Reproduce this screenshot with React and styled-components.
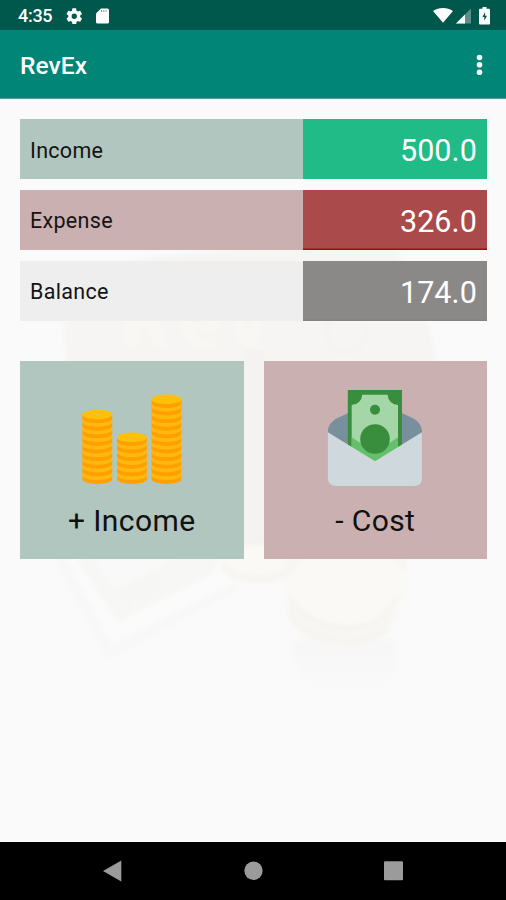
import React from "react";
import styled, { createGlobalStyle } from "styled-components";

const GlobalStyle = createGlobalStyle`
  * { box-sizing: border-box; }
  html, body { margin: 0; padding: 0; }
  body { font-family: Roboto, "Noto Sans", sans-serif; background: #fafafa; }
`;

const Screen = styled.div`
  width: 506px;
  height: 900px;
  display: flex;
  flex-direction: column;
  overflow: hidden;
  background: #fafafa;
`;

const StatusBar = styled.header`
  height: 30px;
  flex: none;
  display: flex;
  align-items: center;
  padding: 2px 16px 0 18px;
  background: #00574b;
  color: #fff;
`;

const Clock = styled.span`
  width: 48px;
  font-size: 18px;
  font-weight: 500;
  line-height: 20px;
  letter-spacing: -0.3px;
`;

const StatusIcons = styled.div`
  display: flex;
  align-items: center;
`;

const LeftIcons = styled(StatusIcons)`
  gap: 13px;
`;

const RightIcons = styled(StatusIcons)`
  gap: 3px;
  margin-left: auto;
`;

const BatterySlot = styled.span`
  display: flex;
  margin-left: 5px;
`;

const AppBar = styled.div`
  height: 69px;
  flex: none;
  display: flex;
  align-items: center;
  justify-content: space-between;
  padding: 2px 23px 0 20px;
  background: #008577;
  border-bottom: 1px solid #4b9c92;
  color: #fff;
`;

const Title = styled.h1`
  margin: 2px 0 0;
  font-size: 24.5px;
  font-weight: 500;
  line-height: 30px;
  letter-spacing: 0.1px;
`;

const MenuButton = styled.button`
  display: flex;
  padding: 0;
  border: 0;
  background: none;
`;

const Content = styled.main`
  flex: 1;
  position: relative;
  padding: 20px 19px 0 20px;
`;

const Backdrop = styled.svg`
  position: absolute;
  left: 0;
  top: 0;
  display: block;
`;

const Body = styled.div`
  position: relative;
  display: flex;
  flex-direction: column;
  gap: 40px;
`;

const Summary = styled.section`
  display: flex;
  flex-direction: column;
  gap: 10.5px;
`;

const SummaryRow = styled.div`
  height: 60.3px;
  display: grid;
  grid-template-columns: 282.5px 1fr;
`;

const RowLabel = styled.div`
  display: flex;
  align-items: center;
  padding: 2px 0 0 10px;
  background: ${(p) => p.$bg};
  color: #141414;
  font-size: 21.5px;
  letter-spacing: 0.3px;
`;

const RowValue = styled.div`
  display: flex;
  align-items: center;
  justify-content: flex-end;
  padding: 3px 10px 0 0;
  background: ${(p) => p.$bg};
  box-shadow: inset 0 -1.5px 0 ${(p) => p.$edge};
  color: #fff;
  font-size: 30.5px;
  letter-spacing: 0.1px;
`;

const Actions = styled.section`
  display: grid;
  grid-template-columns: 1fr 1fr;
  gap: 20px;
`;

const ActionCard = styled.button`
  height: 198px;
  display: flex;
  flex-direction: column;
  align-items: center;
  padding: 24px 0 0;
  border: 0;
  background: ${(p) => p.$bg};
  color: #101010;
  font-family: inherit;
`;

const ActionLabel = styled.span`
  margin-top: 12px;
  font-size: 30px;
  line-height: 40px;
  letter-spacing: 0.4px;
`;

const NavBar = styled.nav`
  height: 58px;
  flex: none;
  display: flex;
  justify-content: space-between;
  align-items: center;
  padding: 0 102px;
  background: #000;
`;

const rows = [
  { label: "Income", value: "500.0", bg: "#b0c6bf", accent: "#20bb87", edge: "#20bb87" },
  { label: "Expense", value: "326.0", bg: "#cab0b0", accent: "#aa4a4a", edge: "#991013" },
  { label: "Balance", value: "174.0", bg: "#eeeeee", accent: "#8b8888", edge: "#858282" },
];

function SettingsIcon() {
  return (
    <svg width="16.500" height="16.500" viewBox="2 2 20 20" fill="#fff">
      <path d="M19.14 12.94c.04-.3.06-.61.06-.94s-.02-.64-.07-.94l2.03-1.58a.49.49 0 0 0 .12-.61l-1.92-3.32a.49.49 0 0 0-.59-.22l-2.39.96a7 7 0 0 0-1.62-.94l-.36-2.54a.48.48 0 0 0-.48-.41h-3.84a.48.48 0 0 0-.47.41l-.36 2.54c-.59.24-1.13.57-1.62.94l-2.39-.96a.48.48 0 0 0-.59.22L2.74 8.87a.48.48 0 0 0 .12.61l2.03 1.58a7 7 0 0 0 0 1.88l-2.03 1.58a.49.49 0 0 0-.12.61l1.92 3.32c.12.22.37.29.59.22l2.39-.96c.5.38 1.03.7 1.62.94l.36 2.54c.05.24.24.41.48.41h3.84c.24 0 .44-.17.47-.41l.36-2.54a7 7 0 0 0 1.62-.94l2.39.96c.22.08.47 0 .59-.22l1.92-3.32a.48.48 0 0 0-.12-.61zM12 15.2a3.2 3.2 0 1 1 0-6.4 3.2 3.2 0 0 1 0 6.4z" />
    </svg>
  );
}

function CardIcon() {
  return (
    <svg width="13" height="16" viewBox="0 0 13 16">
      <path d="M5 .5h6.5Q13 .5 13 2v12q0 1.5-1.5 1.5h-10Q0 15.500 0 14V5.500z" fill="#fff" />
      <path d="M5.500 2v2M7.800 2v2M10 2v2" stroke="#00574b" strokeOpacity=".55" strokeWidth="1" />
    </svg>
  );
}

function WifiIcon() {
  return (
    <svg width="20" height="16" viewBox="0 0 20 16">
      <path d="M0 3C5.700-1 14.300-1 20 3L10 14.800z" fill="#fff" />
    </svg>
  );
}

function SignalIcon() {
  return (
    <svg width="15" height="16" viewBox="0 0 15 16">
      <path d="M0 15.500L15 .5v15z" fill="#fff" fillOpacity=".35" />
      <path d="M0 15.500L9 6.500v9z" fill="#fff" />
    </svg>
  );
}

function BatteryIcon() {
  return (
    <svg width="11" height="18" viewBox="0 0 11 18">
      <path d="M3.500 0h4v1.700H10q1 0 1 1V16.500q0 1-1 1H1q-1 0-1-1V2.700q0-1 1-1h2.500z" fill="#fff" />
      <path d="M6.100 5L3.400 10h1.900v3.700l2.700-5H6.100z" fill="#00574b" />
    </svg>
  );
}

function MoreIcon() {
  return (
    <svg width="7" height="22" viewBox="0 0 7 22" fill="#fff">
      <circle cx="3.500" cy="3.500" r="2.800" />
      <circle cx="3.500" cy="10.800" r="2.800" />
      <circle cx="3.500" cy="18.200" r="2.800" />
    </svg>
  );
}

function CoinStack({ x, coins }) {
  const unit = 3.8;
  const layers = [];
  for (let i = 0; i < coins * 2 - 1; i++) {
    const bottom = 94.2 - i * unit;
    layers.push(
      <path
        key={i}
        d={`M${x} ${bottom - unit}V${bottom}a14.900 4.700 0 0 0 29.800 0V${bottom - unit}z`}
        fill={i % 2 ? "#ffb80c" : "#ff9f02"}
      />
    );
  }
  return (
    <g>
      {layers}
      <ellipse cx={x + 14.9} cy={94.2 - (coins * 2 - 1) * unit} rx="14.900" ry="4.800" fill="#ffc107" />
    </g>
  );
}

function CoinsIcon() {
  return (
    <svg width="120" height="104" viewBox="0 0 120 104">
      <CoinStack x={10.4} coins={9} />
      <CoinStack x={45} coins={6} />
      <CoinStack x={79.6} coins={11} />
    </svg>
  );
}

function EnvelopeIcon() {
  return (
    <svg width="120" height="104" viewBox="0 0 120 104">
      <path d="M12.900 48.200V45.500Q13.300 38.500 21 33.700L60 15.500L99 33.700Q106.500 38.500 106.900 45.500V48.200L60 78z" fill="#78909c" />
      <path d="M32.800 5H87v72H32.800z" fill="#388e3c" />
      <path d="M47.200 9.700H72.600A10.600 10.600 0 0 0 83 20V76H36.700V20A10.600 10.600 0 0 0 47.200 9.700z" fill="#a5d6a7" />
      <circle cx="60" cy="24.700" r="5" fill="#388e3c" />
      <path d="M36.700 52.300L60 67.700L83 52.300V77H36.700z" fill="#66bf6a" />
      <circle cx="60" cy="54" r="14.800" fill="#388e3c" />
      <path d="M12.900 47.300L60 76.200L106.900 47.300V93.500Q106.500 101 99 101H21Q13.300 101 12.900 93.500z" fill="#cfd8dc" />
    </svg>
  );
}

function WalletBackdrop() {
  return (
    <Backdrop width="506" height="743" viewBox="0 99 506 743">
      <defs>
        <filter id="soft" x="-10%" y="-10%" width="120%" height="120%">
          <feGaussianBlur stdDeviation="2" />
        </filter>
        <linearGradient id="shade" x1="0" y1="0" x2="0" y2="1">
          <stop offset="0" stopColor="#f7f7f8" />
          <stop offset="1" stopColor="#fafafa" />
        </linearGradient>
      </defs>
      <path d="M130 262Q200 247 300 248L397 250L430 330L441 380L450 515L250 560L75 470L63 322z" fill="#f6f5f4" filter="url(#soft)" />
      <path d="M244 350h20v210h-20z" fill="#f5f3f1" />
      <text x="122" y="347" fontFamily="Roboto, sans-serif" fontSize="76" fontWeight="900" letterSpacing="8" fill="#f8f7f3" filter="url(#soft)">Rev</text>
      <circle cx="346" cy="332" r="20" fill="none" stroke="#f4f3f3" strokeWidth="5" filter="url(#soft)" />
      <g filter="url(#soft)">
        <path d="M53 556L108 660L238 590L220 550z" fill="#f8f8f8" />
        <path d="M66 558L112 645L233 584L216 550z" fill="#fbfbfb" />
        <path d="M76 558L118 622L209 576L226 548z" fill="#f7f7f6" />
        <path d="M94 558L113 591L162 566L180 555z" fill="#f9f9f9" />
        <text x="123" y="608" transform="rotate(-27 123 608)" fontFamily="Roboto, sans-serif" fontSize="26" fontWeight="700" fill="#f5f5f3">100</text>
        <path d="M290 640H396V670Q370 702 345 702Q315 702 299 670z" fill="url(#shade)" />
        <ellipse cx="258" cy="567" rx="36" ry="16" fill="#f7f5f1" />
        <ellipse cx="258" cy="560" rx="34" ry="15" fill="#faf9f5" />
        <path d="M286 550H410L396 615Q382 647 345 649Q305 647 288 615z" fill="#f8f6f2" />
        <ellipse cx="348" cy="586" rx="60" ry="38" fill="#faf9f5" />
      </g>
      <path d="M292 600Q312 628 348 629Q379 628 397 598M289 613Q307 641 350 641Q373 641 388 628" fill="none" stroke="#f5f3f0" strokeWidth="3" filter="url(#soft)" />
    </Backdrop>
  );
}

export default function App() {
  return (
    <>
      <GlobalStyle />
      <Screen>
        <StatusBar>
          <Clock>4:35</Clock>
          <LeftIcons>
            <SettingsIcon />
            <CardIcon />
          </LeftIcons>
          <RightIcons>
            <WifiIcon />
            <SignalIcon />
            <BatterySlot>
              <BatteryIcon />
            </BatterySlot>
          </RightIcons>
        </StatusBar>
        <AppBar>
          <Title>RevEx</Title>
          <MenuButton aria-label="More options">
            <MoreIcon />
          </MenuButton>
        </AppBar>
        <Content>
          <WalletBackdrop />
          <Body>
            <Summary>
              {rows.map((row) => (
                <SummaryRow key={row.label}>
                  <RowLabel $bg={row.bg}>{row.label}</RowLabel>
                  <RowValue $bg={row.accent} $edge={row.edge}>{row.value}</RowValue>
                </SummaryRow>
              ))}
            </Summary>
            <Actions>
              <ActionCard $bg="#b0c6bf">
                <CoinsIcon />
                <ActionLabel>+ Income</ActionLabel>
              </ActionCard>
              <ActionCard $bg="#cab0b0">
                <EnvelopeIcon />
                <ActionLabel>- Cost</ActionLabel>
              </ActionCard>
            </Actions>
          </Body>
        </Content>
        <NavBar>
          <svg width="20" height="22" viewBox="0 0 20 22">
            <path d="M1 11L19.300 .5V21.500z" fill="#9b9b9b" />
          </svg>
          <svg width="20" height="20" viewBox="0 0 20 20">
            <circle cx="10.500" cy="9.800" r="9.200" fill="#9b9b9b" />
          </svg>
          <svg width="20" height="20" viewBox="0 0 20 20">
            <rect x="0" y=".3" width="19" height="19" rx="1" fill="#9b9b9b" />
          </svg>
        </NavBar>
      </Screen>
    </>
  );
}
